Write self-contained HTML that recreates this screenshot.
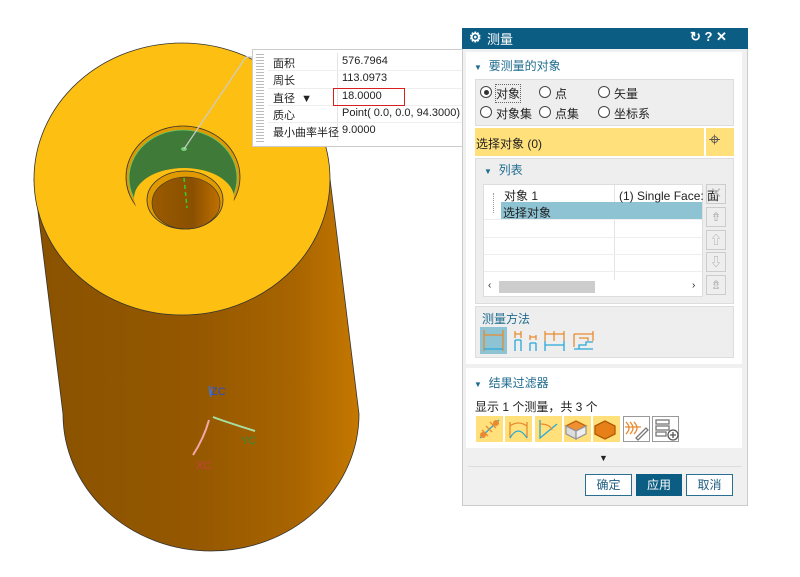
<!DOCTYPE html>
<html><head><meta charset="utf-8"><style>
*{margin:0;padding:0;box-sizing:border-box}
body{width:800px;height:577px;background:#fff;position:relative;overflow:hidden;font-family:"Liberation Sans","Noto Sans CJK SC",sans-serif;font-size:12px;color:#222}
.a{position:absolute}
.t{position:absolute;white-space:nowrap}
.rad{position:absolute;width:12px;height:12px;border:1px solid #444;border-radius:50%;background:#fff}
.btn{position:absolute;border:1px solid #2a6f92;background:#fff;color:#1f5e80;text-align:center;line-height:20px;height:22px}
.ic{position:absolute;top:416px;width:27px;height:26px;background:#ffe07a}
</style></head><body>
<svg class="a" style="left:0;top:0" width="470" height="577">
<defs>
<linearGradient id="bd" x1="0" x2="1"><stop offset="0" stop-color="#8a5200"/><stop offset="0.5" stop-color="#955800"/><stop offset="0.8" stop-color="#a86400"/><stop offset="1" stop-color="#c57800"/></linearGradient>
<linearGradient id="hb" x1="0" x2="1"><stop offset="0" stop-color="#9a5a00"/><stop offset="0.6" stop-color="#8a5000"/><stop offset="1" stop-color="#c07000"/></linearGradient>
</defs>
<path d="M34,179 L63,414 A148,137 0 0 0 359,414 L330,179 Z" fill="url(#bd)" stroke="#333" stroke-width="0.8"/>
<ellipse cx="182" cy="179" rx="148" ry="136" fill="#fdbf12" stroke="#333" stroke-width="0.8"/>
<ellipse cx="183" cy="177" rx="57" ry="51" fill="#e09a00" stroke="#333" stroke-width="0.8"/>
<ellipse cx="183" cy="178" rx="54" ry="48" fill="#3f7a38" stroke="#6c6" stroke-width="0.8"/>
<ellipse cx="184" cy="198" rx="50" ry="30" fill="#fdbf12"/>
<ellipse cx="185" cy="200" rx="38" ry="29" fill="#e09a00" stroke="#333" stroke-width="0.8"/>
<ellipse cx="186" cy="203" rx="34" ry="26" fill="url(#hb)" stroke="#333" stroke-width="0.6"/>
<line x1="184" y1="178" x2="187" y2="208" stroke="#3c3" stroke-width="1.5" stroke-dasharray="4,3"/>
<ellipse cx="184" cy="149" rx="3" ry="2" fill="#7c7"/>
<line x1="184" y1="149" x2="246" y2="57" stroke="#ccc" stroke-width="1.2"/>
<line x1="246" y1="57" x2="254" y2="57" stroke="#ccc" stroke-width="1.2"/>
<path d="M209,386 L211,397 L212,386 L210,395Z" fill="#4a6fc0" stroke="#4a6fc0"/>
<path d="M213,417 Q220,420 255,431" stroke="#a8e0a0" stroke-width="2" fill="none"/>
<path d="M209,420 Q204,438 193,455" stroke="#f2a8a8" stroke-width="2" fill="none"/>
<text x="211" y="395" font-size="11" fill="#2a4fd0" font-family="Liberation Sans">ZC</text>
<text x="241" y="444" font-size="11" fill="#3a8a3a" font-family="Liberation Sans">YC</text>
<text x="196" y="469" font-size="11" fill="#c84040" font-family="Liberation Sans">XC</text>
</svg>
<!-- tooltip -->
<div class="a" style="left:252px;top:49px;width:212px;height:98px;background:#fff;border:1px solid #ccc">
 <div class="a" style="left:3px;top:4px;width:8px;height:88px;background:repeating-linear-gradient(#bbb 0 1px,transparent 1px 3px)"></div>
 <div class="a" style="left:84px;top:3px;width:1px;height:88px;background:#e4e4e4"></div>
 <div class="a" style="left:15px;top:20px;width:197px;height:1px;background:#eee"></div>
 <div class="a" style="left:15px;top:38px;width:197px;height:1px;background:#eee"></div>
 <div class="a" style="left:15px;top:55px;width:197px;height:1px;background:#eee"></div>
 <div class="a" style="left:15px;top:72px;width:197px;height:1px;background:#eee"></div>
 <div class="t" style="left:20px;top:5px;font-size:11px">面积</div><div class="t" style="left:89px;top:5px;font-size:11px">576.7964</div>
 <div class="t" style="left:20px;top:22px;font-size:11px">周长</div><div class="t" style="left:89px;top:22px;font-size:11px">113.0973</div>
 <div class="t" style="left:20px;top:40px;font-size:11px">直径 &nbsp;▼</div><div class="t" style="left:89px;top:40px;font-size:11px">18.0000</div>
 <div class="a" style="left:80px;top:38px;width:72px;height:18px;border:1.5px solid #d82020"></div>
 <div class="t" style="left:20px;top:57px;font-size:11px">质心</div><div class="t" style="left:89px;top:57px;font-size:11px">Point( 0.0, 0.0, 94.3000)</div>
 <div class="t" style="left:20px;top:74px;font-size:11px">最小曲率半径</div><div class="t" style="left:89px;top:74px;font-size:11px">9.0000</div>
</div>
<!-- dialog -->
<div class="a" style="left:462px;top:28px;width:286px;height:478px;background:#f0f0f0;border:1px solid #ccc"></div>
<div class="a" style="left:462px;top:28px;width:286px;height:21px;background:#0b5d84"></div>
<div class="t" style="left:469px;top:29px;color:#fff;font-size:14px;font-weight:bold">⚙</div>
<div class="t" style="left:487px;top:29px;color:#fff;font-size:13px">测量</div>
<div class="t" style="left:690px;top:29px;color:#fff;font-size:13px;font-weight:bold">↻ ? ✕</div>
<div class="a" style="left:466px;top:52px;width:276px;height:312px;background:#fff"></div>
<div class="t" style="left:474px;top:57px;color:#1f6c8f;font-size:12px"><span style="font-size:8px">▼</span>&nbsp; 要测量的对象</div>
<div class="a" style="left:475px;top:79px;width:259px;height:47px;background:#eee;border:1px solid #ddd"></div>
<div class="rad" style="left:480px;top:86px"><div class="a" style="left:3px;top:3px;width:5px;height:5px;border-radius:50%;background:#333"></div></div>
<div class="t" style="left:496px;top:85px;outline:1px dotted #666">对象</div>
<div class="rad" style="left:539px;top:86px"></div><div class="t" style="left:555px;top:85px">点</div>
<div class="rad" style="left:598px;top:86px"></div><div class="t" style="left:614px;top:85px">矢量</div>
<div class="rad" style="left:480px;top:106px"></div><div class="t" style="left:496px;top:105px">对象集</div>
<div class="rad" style="left:539px;top:106px"></div><div class="t" style="left:555px;top:105px">点集</div>
<div class="rad" style="left:598px;top:106px"></div><div class="t" style="left:614px;top:105px">坐标系</div>
<div class="a" style="left:475px;top:128px;width:229px;height:28px;background:#ffe07a"></div>
<div class="a" style="left:706px;top:128px;width:28px;height:28px;background:#ffe07a"></div>
<div class="t" style="left:476px;top:135px">选择对象 (0)</div>
<div class="t" style="left:709px;top:129px;font-size:20px;color:#555">⌖</div>
<div class="a" style="left:475px;top:158px;width:259px;height:146px;background:#eee;border:1px solid #ddd"></div>
<div class="t" style="left:484px;top:161px;color:#1f6c8f"><span style="font-size:8px">▼</span>&nbsp; 列表</div>
<div class="a" style="left:483px;top:184px;width:220px;height:113px;background:#fff;border:1px solid #ddd"></div>
<div class="a" style="left:614px;top:185px;width:1px;height:95px;background:#e4e4e4"></div>
<div class="a" style="left:484px;top:219px;width:218px;height:1px;background:#eee"></div>
<div class="a" style="left:484px;top:237px;width:218px;height:1px;background:#eee"></div>
<div class="a" style="left:484px;top:254px;width:218px;height:1px;background:#eee"></div>
<div class="a" style="left:484px;top:271px;width:218px;height:1px;background:#eee"></div>
<div class="a" style="left:501px;top:202px;width:201px;height:17px;background:#8ec3d3"></div>
<div class="a" style="left:493px;top:193px;width:1px;height:20px;border-left:1px dotted #999"></div>
<div class="t" style="left:504px;top:187px">对象 1</div>
<div class="t" style="left:619px;top:187px">(1) Single Face: 面</div>
<div class="t" style="left:503px;top:204px">选择对象</div>
<div class="a" style="left:499px;top:281px;width:96px;height:12px;background:#cdcdcd"></div>
<div class="t" style="left:488px;top:280px;font-size:10px">‹</div><div class="t" style="left:692px;top:280px;font-size:10px">›</div>
<div class="a" style="left:706px;top:184px;width:20px;height:20px;border:1px solid #ccc;color:#bbb;text-align:center;font-size:15px;line-height:18px">✕</div>
<div class="a" style="left:706px;top:207px;width:20px;height:20px;border:1px solid #ccc;color:#aaa;text-align:center;line-height:18px">⇮</div>
<div class="a" style="left:706px;top:230px;width:20px;height:20px;border:1px solid #ccc;color:#aaa;text-align:center;line-height:18px">⇧</div>
<div class="a" style="left:706px;top:252px;width:20px;height:20px;border:1px solid #ccc;color:#aaa;text-align:center;line-height:18px">⇩</div>
<div class="a" style="left:706px;top:275px;width:20px;height:20px;border:1px solid #ccc;color:#aaa;text-align:center;line-height:18px">⇯</div>
<div class="a" style="left:475px;top:306px;width:259px;height:52px;background:#eee;border:1px solid #ddd"></div>
<div class="t" style="left:482px;top:310px;color:#1f6c8f">测量方法</div>
<div class="a" style="left:480px;top:327px;width:27px;height:27px;background:#8ec3d3"></div>
<svg class="a" style="left:480px;top:327px" width="120" height="27" fill="none" stroke-width="1.3">
<path d="M4,3 V24 M23,3 V24 M4,8 H23" stroke="#e88a30"/><path d="M4,22 H23" stroke="#2aa8d8"/>
<path d="M35,4 V11 M41,4 V11 M35,7 H41 M50,8 V13 M56,8 V13 M50,10 H56" stroke="#e88a30"/><path d="M35,13 V24 M41,13 V24 M35,13 H41 M50,16 V24 M56,16 V24 M50,16 H56" stroke="#2aa8d8"/>
<path d="M65,4 V14 M84,4 V14 M74,4 V14 M65,7 H84" stroke="#e88a30"/><path d="M65,14 V24 M84,14 V24 M65,18 H84" stroke="#2aa8d8"/>
<path d="M94,7 V20 M113,4 V14 M94,7 H113 M99,11 H108 V14" stroke="#e88a30"/><path d="M94,22 H113 M99,22 V18 H106 V15 H113" stroke="#2aa8d8"/>
</svg>
<div class="a" style="left:466px;top:368px;width:276px;height:80px;background:#fff"></div>
<div class="t" style="left:474px;top:374px;color:#1f6c8f"><span style="font-size:8px">▼</span>&nbsp; 结果过滤器</div>
<div class="t" style="left:475px;top:398px">显示 1 个测量，共 3 个</div>
<div class="ic" style="left:476px"></div><div class="ic" style="left:505px"></div><div class="ic" style="left:535px"></div><div class="ic" style="left:564px"></div><div class="ic" style="left:593px"></div>
<div class="ic" style="left:623px;background:#fff;border:1px solid #999"></div><div class="ic" style="left:652px;background:#fff;border:1px solid #999"></div>
<svg class="a" style="left:476px;top:416px" width="206" height="26" fill="none" stroke-width="1.3">
<path d="M4,22 L23,4" stroke="#2aa8d8"/><path d="M6,14 L12,20 M10,10 L16,16 M14,6 L20,12" stroke="#e88a30"/><circle cx="7" cy="19" r="3" fill="#e88a30"/><circle cx="20" cy="7" r="3" fill="#e88a30"/>
<path d="M34,6 V22 M51,6 V22 M34,10 Q42,4 51,10" stroke="#e88a30"/><path d="M34,22 Q42,8 51,22" stroke="#2aa8d8"/>
<path d="M64,4 V22 L81,8" stroke="#2aa8d8"/><path d="M64,8 Q74,8 76,14" stroke="#e88a30"/>
<path d="M90,10 L100,5 L110,10 L100,15 Z" fill="#f09030" stroke="#c06010"/><path d="M90,10 V18 L100,23 V15 Z" fill="#ddd" stroke="#999"/><path d="M110,10 V18 L100,23 V15 Z" fill="#eee" stroke="#999"/>
<path d="M119,10 L129,5 L139,10 V18 L129,23 L119,18 Z" fill="#e8801a" stroke="#b05a00"/>
<path d="M150,6 Q156,12 150,18 M154,6 Q160,12 154,18 M158,6 Q164,12 158,18 M149,11 H165" stroke="#e88a30"/><path d="M160,22 L170,12 L172,14 L162,24 Z" stroke="#777"/>
<rect x="180" y="4" width="13" height="4" stroke="#777"/><rect x="180" y="10" width="13" height="4" stroke="#777"/><rect x="180" y="16" width="10" height="4" stroke="#777"/><circle cx="197" cy="19" r="5" fill="#fff" stroke="#555"/><path d="M194,19 H200 M197,16 V22" stroke="#555"/>
</svg>
<div class="t" style="left:599px;top:453px;font-size:9px">▼</div>
<div class="a" style="left:468px;top:466px;width:274px;height:1px;background:#ddd"></div>
<div class="btn" style="left:585px;top:474px;width:47px">确定</div>
<div class="btn" style="left:636px;top:474px;width:46px;background:#0b5d84;color:#fff;border-color:#0b5d84">应用</div>
<div class="btn" style="left:686px;top:474px;width:47px">取消</div>
</body></html>
